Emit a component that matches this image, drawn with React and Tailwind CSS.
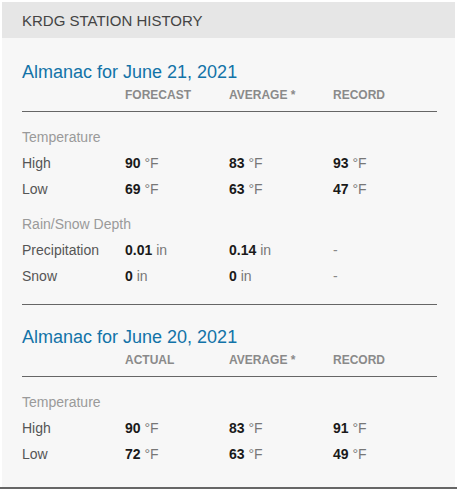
const font = { fontFamily: '"Liberation Sans", Arial, sans-serif' };

const days = [
  {
    title: "Almanac for June 21, 2021",
    first: "FORECAST",
    groups: [
      {
        name: "Temperature",
        rows: [
          ["High", ["90", "°F"], ["83", "°F"], ["93", "°F"]],
          ["Low", ["69", "°F"], ["63", "°F"], ["47", "°F"]],
        ],
      },
      {
        name: "Rain/Snow Depth",
        rows: [
          ["Precipitation", ["0.01", "in"], ["0.14", "in"], null],
          ["Snow", ["0", "in"], ["0", "in"], null],
        ],
      },
    ],
  },
  {
    title: "Almanac for June 20, 2021",
    first: "ACTUAL",
    groups: [
      {
        name: "Temperature",
        rows: [
          ["High", ["90", "°F"], ["83", "°F"], ["91", "°F"]],
          ["Low", ["72", "°F"], ["63", "°F"], ["49", "°F"]],
        ],
      },
    ],
  },
];

function Value({ v }) {
  if (!v) return <span className="text-[#888]">-</span>;
  return (
    <span>
      <span className="font-bold text-[#1a1a1a]">{v[0]}</span>{" "}
      <span className="text-[#777]">{v[1]}</span>
    </span>
  );
}

const cols = "grid grid-cols-[103px_104px_104px_1fr]";

function Day({ day, last }) {
  return (
    <div className={last ? "pt-[21px] pb-[20px]" : "pt-[23px] pb-[15px] border-b border-[#666]"}>
      <h2 className="text-[18px] leading-[22px] text-[#1273a8]">{day.title}</h2>
      <div className={`${cols} h-[29px] pb-[5px] items-center text-[12px] font-bold text-[#8a8a8a] border-b border-[#666]`}>
        <span />
        <span>{day.first}</span>
        <span>AVERAGE *</span>
        <span>RECORD</span>
      </div>
      <div className="pt-[12px]">
        {day.groups.map((g, gi) => (
          <div key={g.name} className={gi > 0 ? "mt-[9px]" : ""}>
            <div className="h-[26px] flex items-center text-[14px] text-[#9a9a9a]">{g.name}</div>
            {g.rows.map((r) => (
              <div key={r[0]} className={`${cols} h-[26px] items-center text-[14px]`}>
                <span className="text-[#555]">{r[0]}</span>
                <Value v={r[1]} />
                <Value v={r[2]} />
                <Value v={r[3]} />
              </div>
            ))}
          </div>
        ))}
      </div>
    </div>
  );
}

export default function App() {
  return (
    <div className="bg-white w-[457px] h-[491px] pt-[2px]" style={font}>
      <div className="mx-[2px] bg-[#f7f7f7]">
        <div className="h-[36px] bg-[#e6e6e6] flex items-center pt-[2px] pl-[20px] text-[15px] text-[#444]">
          KRDG STATION HISTORY
        </div>
        <div className="pl-[20px] pr-[18px]">
          {days.map((d, i) => (
            <Day key={d.title} day={d} last={i === days.length - 1} />
          ))}
        </div>
      </div>
      <div className="h-[2px] bg-[#666]" />
    </div>
  );
}
